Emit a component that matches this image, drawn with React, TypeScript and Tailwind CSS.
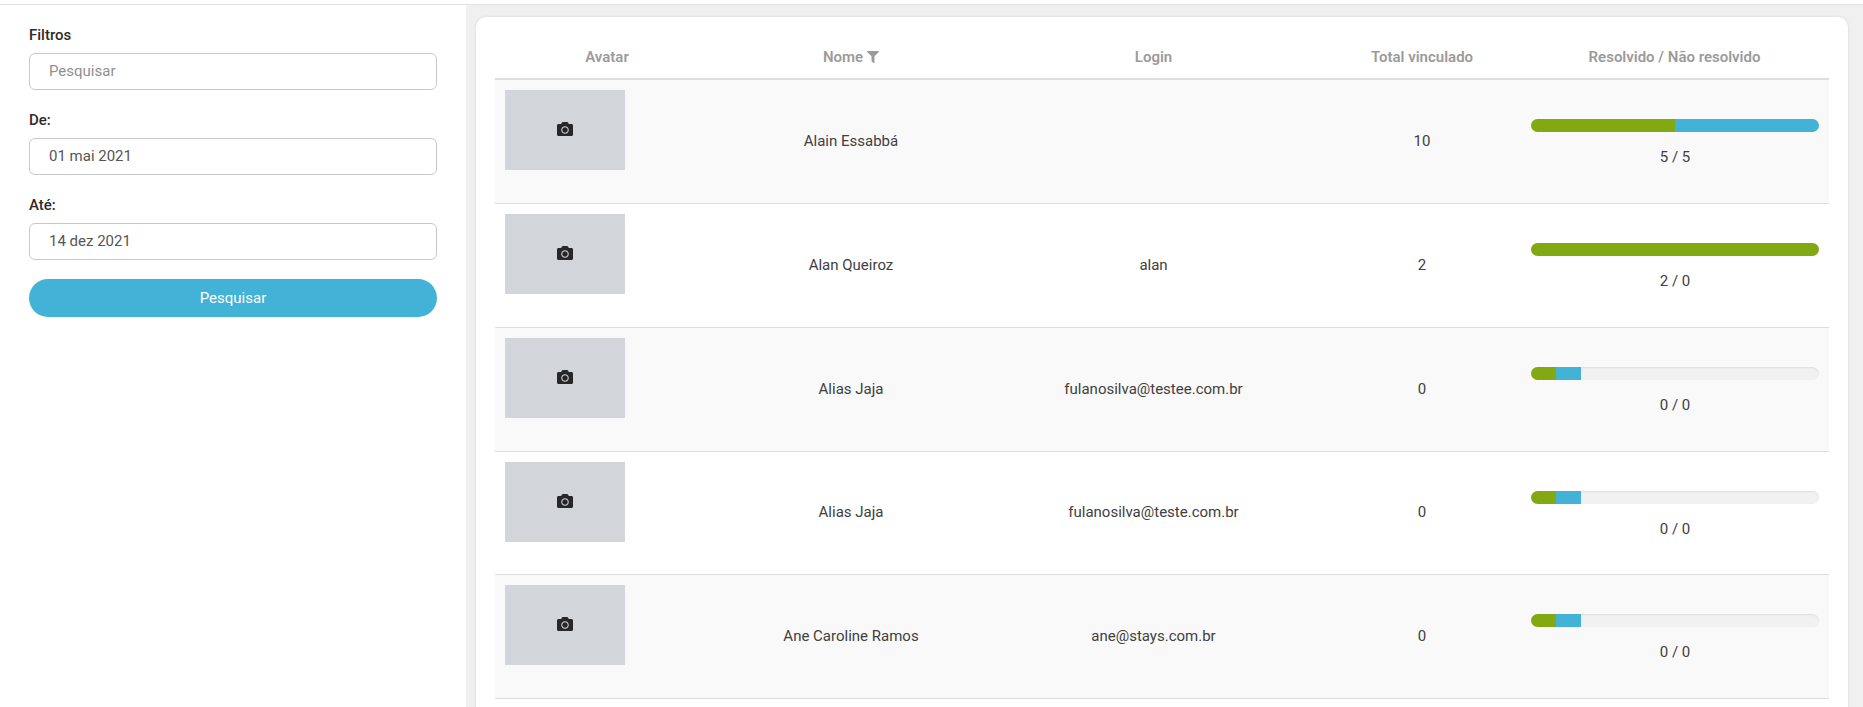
import { FaCamera, FaFilter } from "react-icons/fa";

type Row = {
  name: string;
  login: string;
  total: number;
  green: number;
  blue: number;
  label: string;
  height: string;
};

const rows: Row[] = [
  { name: "Alain Essabbá", login: "", total: 10, green: 50, blue: 50, label: "5 / 5", height: "h-[124px]" },
  { name: "Alan Queiroz", login: "alan", total: 2, green: 100, blue: 0, label: "2 / 0", height: "h-[124px]" },
  { name: "Alias Jaja", login: "fulanosilva@testee.com.br", total: 0, green: 8.7, blue: 8.7, label: "0 / 0", height: "h-[124px]" },
  { name: "Alias Jaja", login: "fulanosilva@teste.com.br", total: 0, green: 8.7, blue: 8.7, label: "0 / 0", height: "h-[123px]" },
  { name: "Ane Caroline Ramos", login: "ane@stays.com.br", total: 0, green: 8.7, blue: 8.7, label: "0 / 0", height: "h-[124px]" },
];

function Field({ label, value, placeholder }: { label: string; value?: string; placeholder?: string }) {
  return (
    <div className="flex flex-col">
      <label className="mb-[9px] h-[18px] text-[15px] leading-[18px] font-medium text-[#2e2a2a]">{label}</label>
      <div
        className={`flex h-[37px] items-center rounded-[6px] border border-[#c8c8c8] pl-[19px] text-[15px] ${
          placeholder ? "text-[#8f8f8f]" : "text-[#555555]"
        }`}
      >
        {value ?? placeholder}
      </div>
    </div>
  );
}

export default function App() {
  return (
    <div className="flex h-[707px] flex-col overflow-hidden bg-white font-['Roboto',sans-serif] text-[15px] text-[#404040]">
      <div className="h-[5px] shrink-0 border-b border-[#e2e2e2] bg-white" />
      <div className="flex min-h-0 flex-1">
        <aside className="flex w-[466px] shrink-0 flex-col bg-white pt-[21px] pr-[29px] pl-[29px]">
          <div className="flex flex-col gap-[21px]">
            <Field label="Filtros" placeholder="Pesquisar" />
            <Field label="De:" value="01 mai 2021" />
            <Field label="Até:" value="14 dez 2021" />
          </div>
          <button className="mt-[19px] h-[38px] w-full rounded-full bg-[#42b2d6] text-center text-[15px] text-white">
            Pesquisar
          </button>
        </aside>
        <main className="min-w-0 flex-1 bg-[#f0f0f0] pt-[12px] pr-[15px] pl-[10px]">
          <div className="h-[720px] rounded-t-[10px] bg-white px-[19px] shadow-[0_0_3px_rgba(0,0,0,0.12)]">
            <table className="w-full table-fixed border-collapse">
              <colgroup>
                <col className="w-[224px]" />
                <col className="w-[264px]" />
                <col className="w-[341px]" />
                <col className="w-[196px]" />
                <col className="w-[309px]" />
              </colgroup>
              <thead>
                <tr className="h-[62px] border-b-2 border-[#dedede] text-[15px] text-[#9b9b9b]">
                  <th className="pt-[19px] font-semibold">Avatar</th>
                  <th className="pt-[19px] font-semibold">
                    <span className="inline-flex items-center gap-[4px]">
                      Nome <FaFilter className="h-[12px] w-[12px]" />
                    </span>
                  </th>
                  <th className="pt-[19px] font-semibold">Login</th>
                  <th className="pt-[19px] font-semibold">Total vinculado</th>
                  <th className="pt-[19px] font-semibold">Resolvido / Não resolvido</th>
                </tr>
              </thead>
              <tbody>
                {rows.map((r, i) => (
                  <tr
                    key={i}
                    className={`${r.height} border-b border-[#dddddd] ${i % 2 === 0 ? "bg-[#f9f9f9]" : "bg-white"}`}
                  >
                    <td className="p-0 pt-[10px] pl-[10px] align-top">
                      <div className="flex h-[80px] w-[120px] items-center justify-center bg-[#d2d5da] pb-[2px] text-[#27272a]">
                        <FaCamera className="h-[16px] w-[16px]" />
                      </div>
                    </td>
                    <td className="text-center">{r.name}</td>
                    <td className="text-center">{r.login}</td>
                    <td className="text-center">{r.total}</td>
                    <td className="pr-[10px] pl-[11px] pt-[2px] text-center">
                      <div className="flex h-[13px] overflow-hidden rounded-full bg-[#f1f1f1] shadow-[inset_0_1px_2px_rgba(0,0,0,0.08)]">
                        <div className="h-full bg-[#83a912]" style={{ width: `${r.green}%` }} />
                        <div className="h-full bg-[#42b2d6]" style={{ width: `${r.blue}%` }} />
                      </div>
                      <div className="mt-[17px] leading-[16px]">{r.label}</div>
                    </td>
                  </tr>
                ))}
              </tbody>
            </table>
          </div>
        </main>
      </div>
    </div>
  );
}
